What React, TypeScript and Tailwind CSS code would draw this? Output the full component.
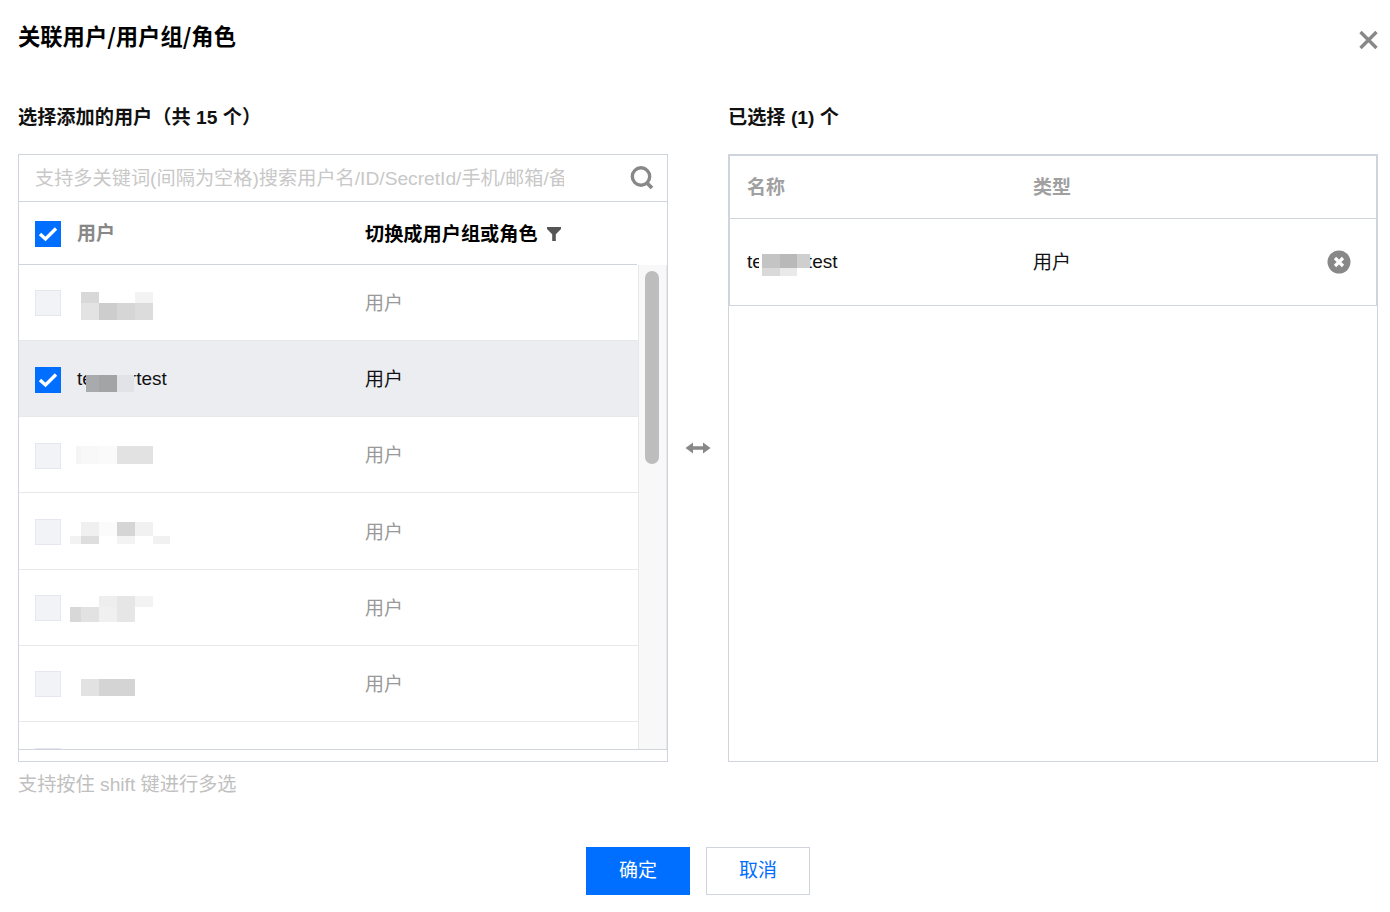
import React from "react";

type Block = [number, number, number, number, string];

// x, y, w, h relative to the name cell's left edge (x=70) and the row's top
const rows: { top: number; blocks: Block[]; checked?: boolean; label?: string }[] = [
    {
        top: 27,
        blocks: [
            [11, 0, 18, 11, "#d8d8d8"],
            [65, 0, 18, 11, "#f3f3f3"],
            [11, 11, 18, 17, "#e3e3e3"],
            [29, 11, 18, 17, "#cdcdcd"],
            [47, 11, 18, 17, "#d6d6d6"],
            [65, 11, 18, 17, "#dcdcdc"],
        ],
    },
    {
        top: 34,
        checked: true,
        blocks: [
            [16, 0, 13, 17, "#a9aaad"],
            [29, 0, 18, 17, "#a3a4a6"],
            [47, 0, 17, 17, "#e2e3e7"],
        ],
    },
    {
        top: 29,
        blocks: [
            [6, 0, 5, 18, "#f5f5f5"],
            [11, 0, 18, 18, "#f8f8f8"],
            [29, 0, 18, 18, "#fafafa"],
            [47, 0, 36, 18, "#e2e2e2"],
        ],
    },
    {
        top: 29,
        blocks: [
            [11, 0, 18, 14, "#f0f0f0"],
            [29, 0, 18, 14, "#fbfbfb"],
            [47, 0, 18, 14, "#d5d5d5"],
            [65, 0, 18, 14, "#f1f1f1"],
            [0, 14, 11, 8, "#f2f2f2"],
            [11, 14, 18, 8, "#dedede"],
            [47, 14, 18, 8, "#f3f3f3"],
            [83, 14, 17, 8, "#f1f1f1"],
        ],
    },
    {
        top: 26,
        blocks: [
            [29, 0, 18, 11, "#eeeeee"],
            [47, 0, 18, 11, "#e6e6e6"],
            [65, 0, 18, 11, "#f3f3f3"],
            [0, 11, 11, 15, "#d8d8d8"],
            [11, 11, 18, 15, "#e2e2e2"],
            [29, 11, 18, 15, "#f0f0f0"],
            [47, 11, 18, 15, "#e6e6e6"],
        ],
    },
    {
        top: 33,
        blocks: [
            [11, 0, 18, 17, "#e2e2e2"],
            [29, 0, 36, 17, "#d4d4d4"],
        ],
    },
];

const Mosaic = ({ blocks, top, left }: { blocks: Block[]; top: number; left: number }) => (
    <svg
        className="absolute"
        style={{ top, left }}
        width="110"
        height="30"
        viewBox="0 0 110 30"
        shapeRendering="crispEdges"
    >
        {blocks.map(([x, y, w, h, fill], i) => (
            <rect key={i} x={x} y={y} width={w} height={h} fill={fill} />
        ))}
    </svg>
);

const Checkbox = ({ checked }: { checked?: boolean }) =>
    checked ? (
        <span className="flex h-[26px] w-[26px] shrink-0 items-center justify-center bg-[#006eff]">
            <svg width="20" height="16" viewBox="0 0 20 16" fill="none">
                <path d="M2 8l5.5 5L18 2.5" stroke="#fff" strokeWidth="3.4" />
            </svg>
        </span>
    ) : (
        <span className="h-[26px] w-[26px] shrink-0 border border-[#e4e8ee] bg-[#f1f3f6]" />
    );

const App = () => {
    return (
        <div className="flex h-[912px] w-[1390px] flex-col overflow-hidden bg-white pl-[18px] pr-[12px] font-['Liberation_Sans','Noto_Sans_CJK_SC',sans-serif] text-[19.2px] text-[#111]">
            <div className="flex h-[74px] items-start justify-between">
                <h2 className="mt-[19px] font-['Noto_Sans_CJK_SC',sans-serif] text-[22.3px] leading-[32px] font-bold text-black">
                    关联用户/用户组/角色
                </h2>
                <svg className="mt-[30px]" width="20" height="20" viewBox="0 0 20 20" fill="none">
                    <path d="M2.5 2l16 16M18.5 2l-16 16" stroke="#888" strokeWidth="3.4" />
                </svg>
            </div>

            <div className="flex h-[80px] shrink-0">
                <div className="mt-[30px] w-[710px] leading-[28px] font-bold">
                    选择添加的用户（共 15 个）
                </div>
                <div className="mt-[30px] leading-[28px] font-bold">已选择 (1) 个</div>
            </div>

            <div className="flex h-[608px] shrink-0">
                {/* left panel */}
                <div className="flex h-full w-[650px] flex-col border border-[#d0d5dd]">
                    <div className="flex h-[47px] shrink-0 items-center justify-between border-b border-[#d0d5dd] pl-[16px] pr-[12px]">
                        <input
                            readOnly
                            className="mt-[2px] w-[529px] bg-transparent text-[19.2px] outline-none placeholder:text-[#c8c8c8]"
                            placeholder="支持多关键词(间隔为空格)搜索用户名/ID/SecretId/手机/邮箱/备注"
                        />
                        <svg width="26" height="26" viewBox="0 0 26 26" fill="none">
                            <circle cx="12" cy="11.5" r="8.7" stroke="#888" strokeWidth="3.4" />
                            <path d="M18 18l5 5" stroke="#888" strokeWidth="3.8" />
                        </svg>
                    </div>

                    <div className="flex h-[63px] w-[618px] shrink-0 items-center border-b border-[#d0d5dd] pl-[16px] pt-[2px]">
                        <Checkbox checked />
                        <span className="ml-[16px] w-[288px] text-[19px] font-bold text-[#888]">用户</span>
                        <span className="pt-[2px] text-[19.2px] font-bold text-black">切换成用户组或角色</span>
                        <svg className="ml-[9px]" width="14" height="14" viewBox="0 0 14 14">
                            <path d="M0 0h14v2L8.8 7.2V14H5.2V7.2L0 2z" fill="#555" />
                        </svg>
                    </div>

                    <div className="flex h-[484px] shrink-0 overflow-hidden">
                        <div className="w-[619px] shrink-0">
                            {rows.map((row, i) => (
                                <div
                                    key={i}
                                    className={`relative flex h-[76.15px] items-center border-b pl-[16px] pt-[1.6px] ${
                                        row.checked
                                            ? "border-[#e6e8ec] bg-[#ebedf1] text-[#111]"
                                            : "border-[#e8e8e8] text-[#999]"
                                    }`}
                                >
                                    <Checkbox checked={row.checked} />
                                    <span className="ml-[16px] flex w-[288px] text-[19px]">
                                        {row.checked && (
                                            <>
                                                <span>te</span>
                                                <span className="ml-[37px]">rtest</span>
                                            </>
                                        )}
                                    </span>
                                    <span className="pt-[2px] text-[19px]">用户</span>
                                    <Mosaic blocks={row.blocks} top={row.top} left={51} />
                                </div>
                            ))}
                            <div className="h-[28px] pl-[16px] pt-[26px]">
                                <span className="block h-[26px] w-[26px] border border-[#e4e8ee] bg-[#f1f3f6]" />
                            </div>
                        </div>
                        <div className="flex-1 border-x border-[#e8e8e8] bg-[#f8f8f8] pl-[6px] pt-[6px]">
                            <div className="h-[193px] w-[14px] rounded-[7px] bg-[#bdbdbd]" />
                        </div>
                    </div>
                    <div className="flex-1 border-t border-[#d0d5dd]" />
                </div>

                {/* transfer arrow */}
                <div className="flex w-[60px] shrink-0 items-center justify-center">
                    <svg className="mb-[20px]" width="26" height="12" viewBox="0 0 26 12">
                        <path d="M0.5 6L8 0.5V4.3H18V0.5L25.5 6L18 11.5V7.7H8V11.5z" fill="#888" />
                    </svg>
                </div>

                {/* right panel */}
                <div className="h-full w-[650px] border border-[#d0d5dd]">
                    <div className="border border-[#d0d5dd]">
                        <div className="flex h-[63px] items-center border-b border-[#d0d5dd] pl-[17px] pt-[3px] text-[19px] font-bold text-[#a0a0a0]">
                            <span className="w-[286px]">名称</span>
                            <span>类型</span>
                        </div>
                        <div className="relative flex h-[86px] items-center pl-[17px] pr-[25px] text-[19px]">
                            <span className="flex w-[286px]">
                                <span>te</span>
                                <span className="ml-[44px]">test</span>
                            </span>
                            <span className="flex-1 pt-[2px]">用户</span>
                            <svg width="24" height="24" viewBox="0 0 24 24">
                                <circle cx="12" cy="12" r="11.5" fill="#888" />
                                <path d="M8 8l8 8M16 8l-8 8" stroke="#fff" strokeWidth="3.2" />
                            </svg>
                            <Mosaic
                                top={35}
                                left={29}
                                blocks={[
                                    [0, 0, 3, 18, "#ffffff"],
                                    [3, 0, 18, 14, "#c4c4c4"],
                                    [21, 0, 17, 14, "#b9b9b9"],
                                    [38, 0, 13, 14, "#cfcfcf"],
                                    [3, 14, 18, 8, "#d9d9d9"],
                                    [21, 14, 17, 8, "#e9e9e9"],
                                ]}
                            />
                        </div>
                    </div>
                </div>
            </div>

            <div className="mt-[9px] h-[28px] leading-[28px] text-[#c0c0c0]">
                支持按住 shift 键进行多选
            </div>

            <div className="mt-[48px] flex justify-center gap-[16px]">
                <button className="h-[48px] w-[104px] bg-[#006eff] text-[19px] text-white">确定</button>
                <button className="h-[48px] w-[104px] border border-[#d0d5dd] bg-white text-[19px] text-[#006eff]">
                    取消
                </button>
            </div>
        </div>
    );
};

export default App;
